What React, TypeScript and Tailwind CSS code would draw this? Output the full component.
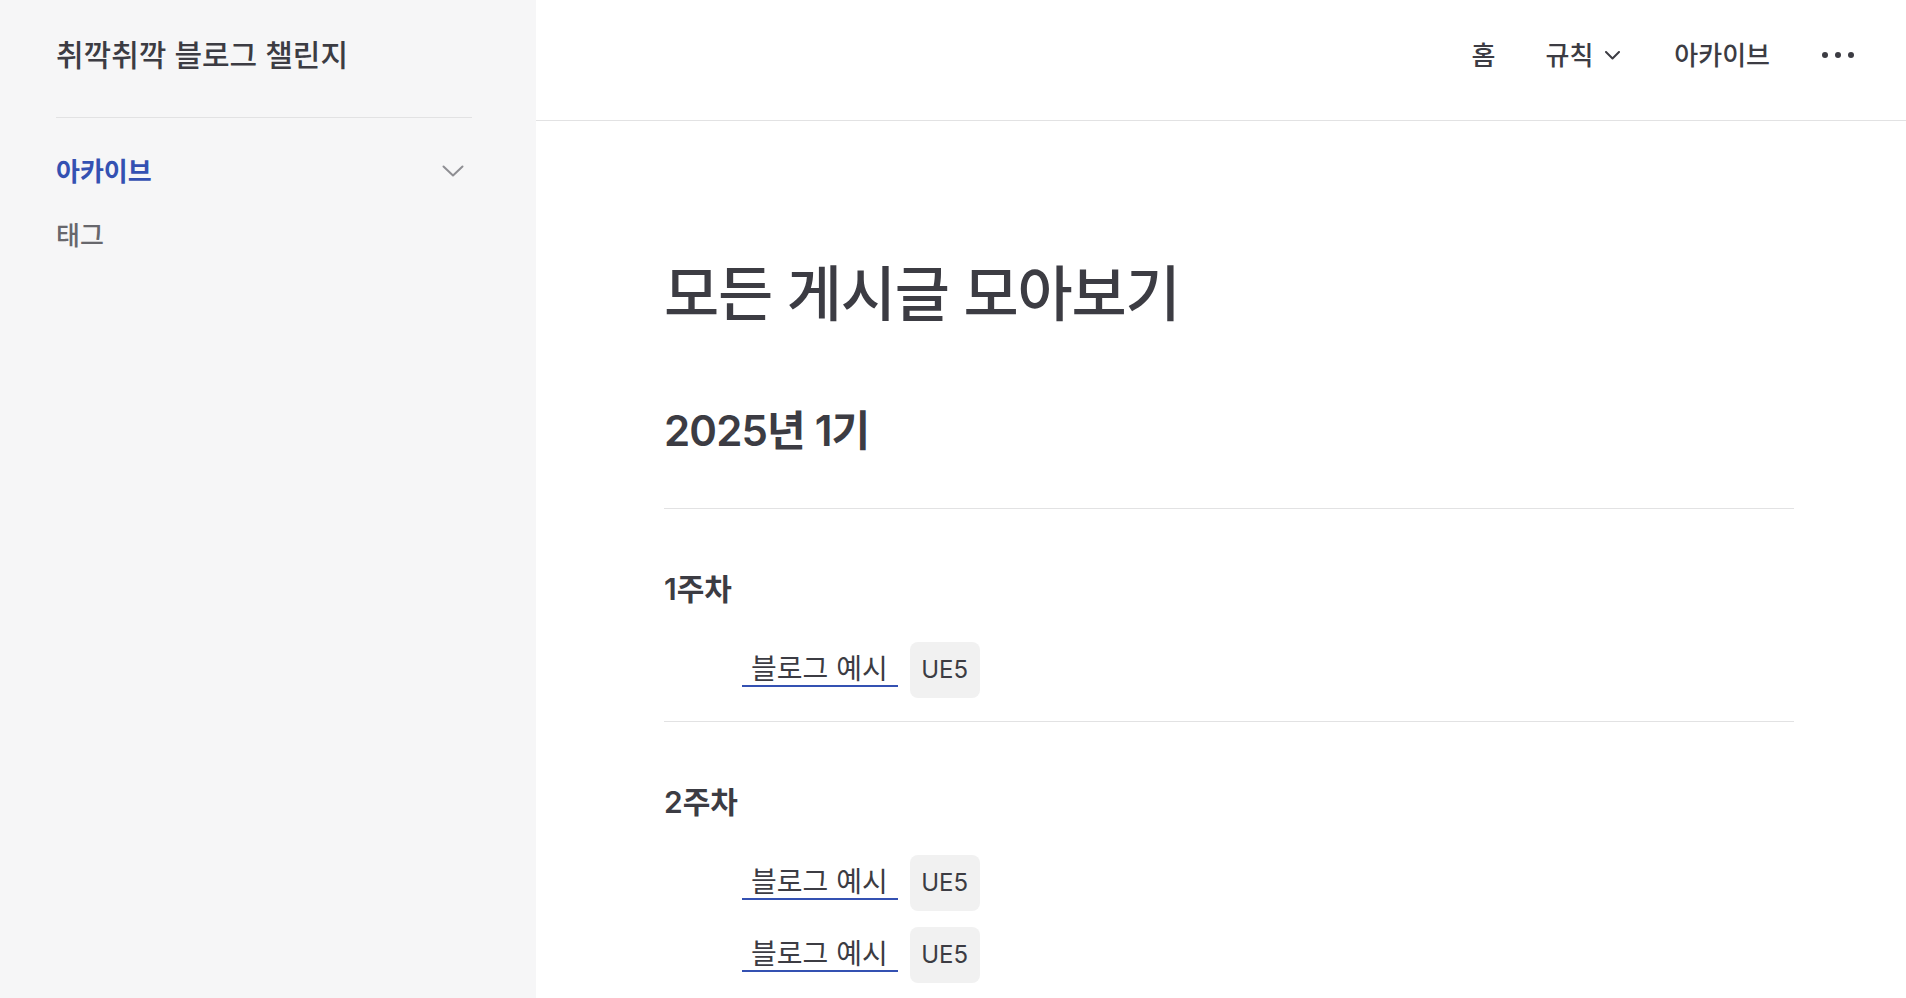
const weeks = [
  { title: '1주차', posts: [{ title: '블로그 예시', tag: 'UE5' }] },
  {
    title: '2주차',
    posts: [
      { title: '블로그 예시', tag: 'UE5' },
      { title: '블로그 예시', tag: 'UE5' },
    ],
  },
]

function PostRow({ title, tag }: { title: string; tag: string }) {
  return (
    <div className="flex h-[56px] items-center pl-[78px]">
      <a
        href="#"
        className="border-b-2 border-[#3451b2] pl-[9px] pr-[10px] text-[28px] leading-[32px] text-[#3c3c43]"
      >
        {title}
      </a>
      <span className="ml-[12px] flex h-[56px] w-[70px] items-center justify-center rounded-[8px] bg-[#f1f1f1] text-[24px] text-[#3c3c43]">
        {tag}
      </span>
    </div>
  )
}

export default function App() {
  return (
    <div className="flex min-h-screen font-['Inter','Noto_Sans_CJK_KR',sans-serif] text-[#3c3c43]">
      <aside className="w-[536px] shrink-0 bg-[#f6f6f7] pl-[56px] pr-[64px]">
        <div className="h-[118px] border-b border-[#e2e2e3] pt-[36px]">
          <div className="text-[30px] font-medium leading-[38px]">취깍취깍 블로그 챌린지</div>
        </div>
        <nav className="pt-[29px]">
          <div className="flex h-[48px] items-center justify-between">
            <span className="text-[26px] font-semibold text-[#3451b2]">아카이브</span>
            <svg width="22" height="12" viewBox="0 0 22 12" className="mr-[8px] text-[#8e8e93]">
              <polyline points="1.5,1.5 11,10.5 20.5,1.5" fill="none" stroke="currentColor" strokeWidth="2" strokeLinecap="round" strokeLinejoin="round" />
            </svg>
          </div>
          <div className="mt-[16px] flex h-[48px] items-center">
            <span className="text-[26px] font-medium text-[#67676c]">태그</span>
          </div>
        </nav>
      </aside>

      <div className="flex-1">
        <header className="h-[121px] border-b border-[#e2e2e3]">
          <div className="flex h-[110px] items-center justify-end pr-[52px] text-[26px] font-medium">
            <span>홈</span>
            <span className="ml-[50px] flex items-center">
              규칙
              <svg width="15" height="9" viewBox="0 0 15 9" className="ml-[12px]">
                <polyline points="1,1 7.5,7.5 14,1" fill="none" stroke="currentColor" strokeWidth="2" strokeLinecap="round" strokeLinejoin="round" />
              </svg>
            </span>
            <span className="ml-[54px]">아카이브</span>
            <span className="ml-[52px] flex items-center gap-[7px]">
              <span className="h-[6px] w-[6px] rounded-full bg-[#3c3c43]" />
              <span className="h-[6px] w-[6px] rounded-full bg-[#3c3c43]" />
              <span className="h-[6px] w-[6px] rounded-full bg-[#3c3c43]" />
            </span>
          </div>
        </header>

        <main className="w-[1258px] pl-[128px]">
          <h1 className="mt-[137px] text-[60px] font-medium leading-[72px] tracking-[-0.02em]">
            모든 게시글 모아보기
          </h1>
          <h2 className="mb-[51px] mt-[75px] text-[42px] font-semibold leading-[52px] tracking-[-0.02em]">
            2025년 1기
          </h2>
          {weeks.map((week) => (
            <section key={week.title} className="border-t border-[#e2e2e3]">
              <h3 className="mt-[62px] text-[30px] font-semibold leading-[36px]">{week.title}</h3>
              <div className="mt-[35px] flex flex-col gap-[16px] pb-[23px]">
                {week.posts.map((p, i) => (
                  <PostRow key={i} title={p.title} tag={p.tag} />
                ))}
              </div>
            </section>
          ))}
        </main>
      </div>
    </div>
  )
}
